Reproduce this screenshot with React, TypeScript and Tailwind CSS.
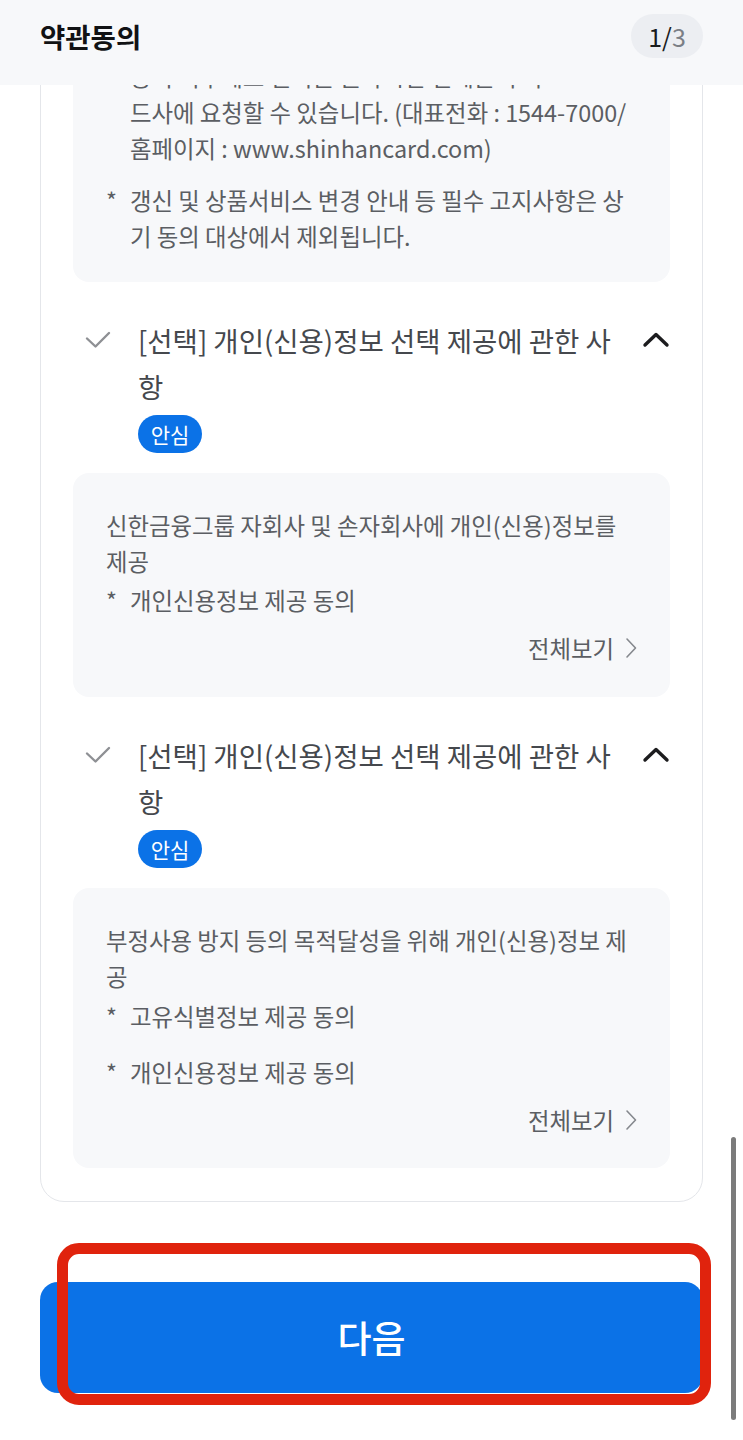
import React from "react";

const body = "text-[23.4px] leading-[36px] text-[#5b5e63]";

function Star({ children, className = "" }: { children: React.ReactNode; className?: string }) {
  return (
    <div className={`flex ${className}`}>
      <span className="w-[24px] shrink-0">*</span>
      <span className="whitespace-nowrap">{children}</span>
    </div>
  );
}

function CheckIcon() {
  return (
    <svg width="26" height="18" viewBox="0 0 26 18" fill="none" className="shrink-0">
      <path d="M2 7.5 L10.5 15.5 L24 2" stroke="#8e9094" strokeWidth="2.4" strokeLinecap="round" strokeLinejoin="round" />
    </svg>
  );
}

function ChevronUp() {
  return (
    <svg width="28" height="16" viewBox="0 0 28 16" fill="none">
      <path d="M3 13 L14 2.5 L25 13" stroke="#1c1c1e" strokeWidth="3.4" strokeLinecap="round" strokeLinejoin="round" />
    </svg>
  );
}

function ViewAll() {
  return (
    <div className="mt-[12px] flex items-center justify-end gap-[11px]">
      <span className={`whitespace-nowrap ${body}`}>전체보기</span>
      <svg width="12" height="22" viewBox="0 0 12 22" fill="none">
        <path d="M2 2 L10.5 11 L2 20" stroke="#85888d" strokeWidth="1.6" strokeLinecap="round" strokeLinejoin="round" />
      </svg>
    </div>
  );
}

function ItemHeader() {
  return (
    <div className="pt-[35px]">
      <div className="flex items-start pl-[12px]">
        <div className="flex h-[46px] w-[26px] items-center">
          <CheckIcon />
        </div>
        <div className="ml-[27px] flex-1">
          <p className="whitespace-nowrap text-[27.5px] leading-[46px] text-[#45484d]">
            [선택] 개인(신용)정보 선택 제공에 관한 사
            <br />항
          </p>
          <span className="mt-[6px] inline-flex h-[38px] w-[64px] items-center justify-center rounded-full bg-[#0b72e7] text-[21px] leading-none text-white">
            안심
          </span>
        </div>
        <div className="flex h-[46px] w-[28px] items-center">
          <ChevronUp />
        </div>
      </div>
    </div>
  );
}

export default function App() {
  return (
    <div className="relative flex h-[1440px] w-[743px] flex-col overflow-hidden bg-white font-['Noto_Sans_CJK_KR','Noto_Sans',sans-serif]">
      <header className="relative z-10 flex h-[85px] shrink-0 items-start justify-between bg-[#f7f8fa] pl-[40px] pr-[40px] pt-[14px]">
        <h1 className="text-[27.5px] font-bold leading-[44px] text-[#111214]">약관동의</h1>
        <div className="flex h-[44px] w-[72px] items-center justify-center rounded-full bg-[#eceef2] text-[25px] leading-none">
          <span className="text-[#1a1b1d]">1/</span>
          <span className="text-[#7b7f86]">3</span>
        </div>
      </header>

      <main className="flex h-[1158px] shrink-0 flex-col justify-end overflow-hidden px-[40px] pb-[41px]">
        <section className="shrink-0 rounded-[24px] border border-[#e4e6ea] bg-white px-[32px] pb-[33px]">
          <div className={`rounded-[16px] bg-[#f7f8fa] px-[33px] pb-[28px] pt-[33px] ${body}`}>
            <p className="whitespace-nowrap">
              귀하는 개인(신용)정보의 선택적인 제공 및 이
              <br />
              용에 대한 동의를 거부할 수 있습니다.
            </p>
            <Star className="mt-[16px]">
              동의 이후에도 철회를 원하시면 언제든지 카
              <br />
              드사에 요청할 수 있습니다. (대표전화 : 1544-7000/
              <br />
              홈페이지 : www.shinhancard.com)
            </Star>
            <Star className="mt-[16px]">
              갱신 및 상품서비스 변경 안내 등 필수 고지사항은 상
              <br />기 동의 대상에서 제외됩니다.
            </Star>
          </div>

          <ItemHeader />
          <div className={`mt-[20px] rounded-[16px] bg-[#f7f8fa] px-[33px] pb-[31px] pt-[34px] ${body}`}>
            <p className="whitespace-nowrap">
              신한금융그룹 자회사 및 손자회사에 개인(신용)정보를
              <br />
              제공
            </p>
            <Star className="mt-[3px]">개인신용정보 제공 동의</Star>
            <ViewAll />
          </div>

          <ItemHeader />
          <div className={`mt-[20px] rounded-[16px] bg-[#f7f8fa] px-[33px] pb-[30px] pt-[34px] ${body}`}>
            <p className="whitespace-nowrap">
              부정사용 방지 등의 목적달성을 위해 개인(신용)정보 제
              <br />공
            </p>
            <Star className="mt-[4px]">고유식별정보 제공 동의</Star>
            <Star className="mt-[20px]">개인신용정보 제공 동의</Star>
            <ViewAll />
          </div>
        </section>
      </main>

      <footer className="px-[40px] pt-[39px]">
        <button className="flex h-[111px] w-full items-center justify-center rounded-[18px] bg-[#0b72e7] text-[37px] font-medium text-white">
          다음
        </button>
      </footer>

      <div className="pointer-events-none absolute left-[57px] top-[1243px] h-[162px] w-[654px] rounded-[22px] border-[11px] border-[#e0230d]" />
      <div className="absolute left-[731px] top-[1137px] h-[283px] w-[5px] rounded-full bg-[#7b7b7b]" />
    </div>
  );
}
